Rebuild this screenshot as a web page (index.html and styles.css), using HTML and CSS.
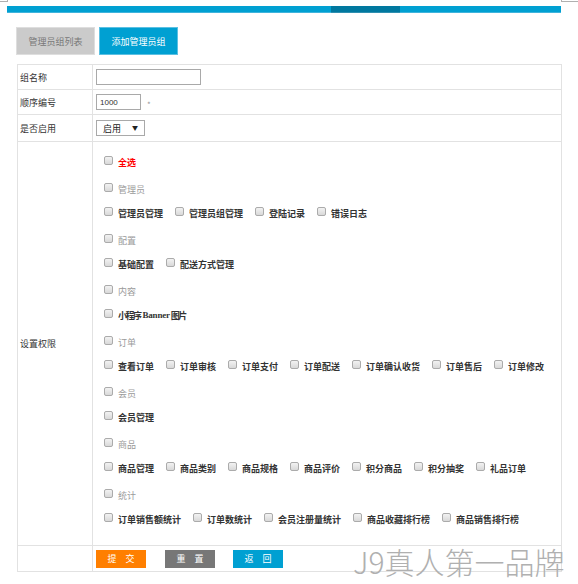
FILE: index.html
```html
<!DOCTYPE html>
<html lang="zh-CN">
<head>
<meta charset="utf-8">
<title>添加管理员组</title>
<link rel="stylesheet" href="styles.css">
</head>
<body>
<span class="mark mark-l"></span><span class="mark mark-r"></span>
<div class="topbar"><span class="seg seg-a"></span><span class="seg seg-b"></span><span class="seg seg-c"></span></div>
<div class="tabs">
  <a class="tab tab-off">管理员组列表</a>
  <a class="tab tab-on">添加管理员组</a>
</div>
<table class="form">
  <tr class="row-a"><th>组名称</th><td><input class="txt txt-name" type="text"></td></tr>
  <tr class="row-a"><th>顺序编号</th><td><input class="txt txt-order" type="text" value="1000"><span class="req">*</span></td></tr>
  <tr class="row-b"><th>是否启用</th><td><span class="sel"><select><option>启用</option><option>禁用</option></select><span class="arrow">▼</span></span></td></tr>
  <tr><th>设置权限</th><td class="perm">
    <div class="line"><label class="item"><input type="checkbox" class="cb"><span class="all">全选</span></label></div>
    <div class="group">
      <div class="line head"><label class="item"><input type="checkbox" class="cb">管理员</label></div>
      <div class="line"><label class="item"><input type="checkbox" class="cb">管理员管理</label><label class="item"><input type="checkbox" class="cb">管理员组管理</label><label class="item"><input type="checkbox" class="cb">登陆记录</label><label class="item"><input type="checkbox" class="cb">错误日志</label></div>
    </div>
    <div class="group">
      <div class="line head"><label class="item"><input type="checkbox" class="cb">配置</label></div>
      <div class="line"><label class="item"><input type="checkbox" class="cb">基础配置</label><label class="item"><input type="checkbox" class="cb">配送方式管理</label></div>
    </div>
    <div class="group">
      <div class="line head"><label class="item"><input type="checkbox" class="cb">内容</label></div>
      <div class="line"><label class="item"><input type="checkbox" class="cb"><span class="narrow">小程序</span><span class="latin">Banner</span><span class="narrow">图片</span></label></div>
    </div>
    <div class="group">
      <div class="line head"><label class="item"><input type="checkbox" class="cb">订单</label></div>
      <div class="line"><label class="item"><input type="checkbox" class="cb">查看订单</label><label class="item"><input type="checkbox" class="cb">订单审核</label><label class="item"><input type="checkbox" class="cb">订单支付</label><label class="item"><input type="checkbox" class="cb">订单配送</label><label class="item"><input type="checkbox" class="cb">订单确认收货</label><label class="item"><input type="checkbox" class="cb">订单售后</label><label class="item"><input type="checkbox" class="cb">订单修改</label></div>
    </div>
    <div class="group">
      <div class="line head"><label class="item"><input type="checkbox" class="cb">会员</label></div>
      <div class="line"><label class="item"><input type="checkbox" class="cb">会员管理</label></div>
    </div>
    <div class="group">
      <div class="line head"><label class="item"><input type="checkbox" class="cb">商品</label></div>
      <div class="line"><label class="item"><input type="checkbox" class="cb">商品管理</label><label class="item"><input type="checkbox" class="cb">商品类别</label><label class="item"><input type="checkbox" class="cb">商品规格</label><label class="item"><input type="checkbox" class="cb">商品评价</label><label class="item"><input type="checkbox" class="cb">积分商品</label><label class="item"><input type="checkbox" class="cb">积分抽奖</label><label class="item"><input type="checkbox" class="cb">礼品订单</label></div>
    </div>
    <div class="group">
      <div class="line head"><label class="item"><input type="checkbox" class="cb">统计</label></div>
      <div class="line"><label class="item"><input type="checkbox" class="cb">订单销售额统计</label><label class="item"><input type="checkbox" class="cb">订单数统计</label><label class="item"><input type="checkbox" class="cb">会员注册量统计</label><label class="item"><input type="checkbox" class="cb">商品收藏排行榜</label><label class="item"><input type="checkbox" class="cb">商品销售排行榜</label></div>
    </div>
  </td></tr>
  <tr class="row-c"><th></th><td class="actions"><button class="btn btn-submit">提交</button><button class="btn btn-reset">重置</button><button class="btn btn-back">返回</button></td></tr>
</table>
<div class="watermark">J9真人第一品牌</div>
</body>
</html>
```

FILE: styles.css
```css
html, body {
  margin: 0;
  padding: 0;
  background: #fff;
}
body {
  position: relative;
  width: 578px;
  height: 584px;
  overflow: hidden;
  font-family: "Noto Sans CJK SC", "Liberation Sans", sans-serif;
  font-size: 9px;
  color: #333;
}
.mark {
  position: absolute;
  top: 0;
  height: 1px;
  border-bottom: 1px solid #b0b0b0;
}
.mark-l {
  left: 0;
  width: 7px;
  border-right: 1px solid #b0b0b0;
}
.mark-r {
  left: 561px;
  width: 17px;
  border-left: 1px solid #b0b0b0;
}
.topbar {
  display: flex;
  margin: 6px 0 0 7px;
  width: 554px;
  height: 7px;
}
.seg {
  display: block;
  height: 6px;
  border-bottom: 1px solid #3fb4dc;
}
.seg-a { width: 324px; background: #00a0d2; }
.seg-b { width: 69px; background: #00789f; border-bottom-color: #2f8fb0; }
.seg-c { flex: 1; background: #00a0d2; }

.tabs {
  display: flex;
  gap: 4px;
  margin: 14px 0 0 16px;
}
.tab {
  display: flex;
  align-items: center;
  justify-content: center;
  width: 79px;
  height: 28px;
  box-sizing: border-box;
  font-size: 9px;
}
.tab-off {
  background: #cbcbcb;
  color: #787878;
  border: 1px solid #dedede;
}
.tab-on {
  background: #00a0d2;
  color: #fff;
  border: 1px solid #5bc0e2;
}

.form {
  margin: 9px 0 0 17px;
  width: 545px;
  border-collapse: collapse;
  table-layout: fixed;
}
.form th, .form td {
  border: 1px solid #e2e2e2;
  padding: 0;
  vertical-align: middle;
}
.form th {
  width: 72px;
  padding-left: 2px;
  text-align: left;
  font-weight: normal;
  color: #333;
}
.form td {
  padding-left: 3px;
}
.row-a th, .row-a td { height: 24px; }
.row-b th, .row-b td { height: 26px; }
.row-c th, .row-c td { height: 25px; }

.txt {
  box-sizing: border-box;
  height: 16px;
  border: 1px solid #a9a9a9;
  padding: 0 3px;
  margin: 0;
  font-family: "Liberation Sans", sans-serif;
  font-size: 8px;
  color: #333;
  vertical-align: middle;
  outline: none;
}
.txt-name { width: 105px; }
.txt-order { width: 45px; }
.req {
  display: inline-block;
  margin-left: 6px;
  padding-top: 4px;
  color: #999;
  font-size: 8px;
  vertical-align: middle;
}
.sel {
  position: relative;
  display: inline-block;
  vertical-align: middle;
}
.sel select {
  appearance: none;
  -webkit-appearance: none;
  box-sizing: border-box;
  width: 49px;
  height: 16px;
  margin: 0;
  padding: 0 0 0 6px;
  border: 1px solid #a9a9a9;
  border-radius: 0;
  background: #fff;
  font-family: "Noto Sans CJK SC", sans-serif;
  font-size: 9px;
  color: #222;
  display: block;
}
.arrow {
  position: absolute;
  right: 7px;
  top: 4px;
  font-size: 6px;
  line-height: 8px;
  color: #222;
  pointer-events: none;
}

.form td.perm {
  padding: 8px 0 14px 11px;
}
.line {
  display: flex;
  align-items: center;
  height: 24px;
}
.group {
  margin-top: 3px;
}
.item {
  display: flex;
  align-items: center;
  margin-right: 12px;
  font-weight: bold;
  color: #333;
  white-space: nowrap;
}
.head .item {
  font-weight: normal;
  color: #9a9a9a;
}
.all {
  color: #ff0000;
  font-weight: bold;
}
.cb {
  appearance: none;
  -webkit-appearance: none;
  box-sizing: border-box;
  width: 9px;
  height: 9px;
  margin: -3px 5px 0 0;
  border: 1px solid #ababab;
  border-radius: 2px;
  background: linear-gradient(#f2f2f2, #d9d9d9);
}
.narrow {
  letter-spacing: -1.5px;
  margin-right: 2px;
}
.latin {
  font-family: "Liberation Serif", serif;
  font-size: 9px;
  letter-spacing: -0.2px;
  margin-right: 1px;
}

.form td.actions {
  padding-left: 3px;
}
.actions {
  font-size: 0;
}
.btn {
  display: inline-block;
  width: 50px;
  height: 18px;
  margin: 0 19px 0 0;
  padding: 0;
  border: none;
  color: #fff;
  font-family: "Noto Sans CJK SC", sans-serif;
  font-size: 9px;
  letter-spacing: 9px;
  text-indent: 9px;
  text-align: center;
  vertical-align: middle;
  line-height: 18px;
}
.btn-reset { margin-right: 18px; }
.btn-submit { background: #ff7f00; }
.btn-reset { background: #777777; }
.btn-back { background: #00a0d2; }

.watermark {
  position: absolute;
  left: 353px;
  top: 546px;
  font-family: "Noto Sans CJK SC", sans-serif;
  font-weight: 300;
  font-size: 30px;
  line-height: 30px;
  color: #b0b0b0;
  white-space: nowrap;
}
```
